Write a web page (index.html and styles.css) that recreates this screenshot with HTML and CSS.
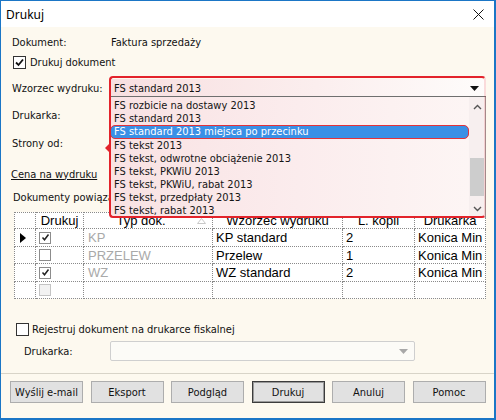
FILE: index.html
```html
<!DOCTYPE html>
<html lang="pl">
<head>
<meta charset="utf-8">
<title>Drukuj</title>
<link rel="stylesheet" href="styles.css">
</head>
<body>
<div class="win">
  <div class="titlebar">
    <span class="title">Drukuj</span>
    <svg class="close" width="11" height="11" viewBox="0 0 11 11"><path d="M0.5 0.5 L10.5 10.5 M10.5 0.5 L0.5 10.5" stroke="#111" stroke-width="1" fill="none"/></svg>
  </div>
  <div class="body">
    <div class="row r-doc"><span class="lbl">Dokument:</span><span class="val">Faktura sprzedaży</span></div>
    <div class="row r-chk">
      <span class="cb"><svg width="11" height="11" viewBox="0 0 11 11"><path d="M2 5.5 L4.5 8 L9 2.5" stroke="#111" stroke-width="1.8" fill="none"/></svg></span>
      <span>Drukuj dokument</span>
    </div>
    <div class="row r-wz">
      <span class="lbl">Wzorzec wydruku:</span>
      <div class="combo-wrap">
        <div class="combo"><span>FS standard 2013</span><svg class="arr" width="9" height="5" viewBox="0 0 9 5"><path d="M0 0 H9 L4.5 5 Z" fill="#111"/></svg></div>
        <div class="droplist">
          <div class="items">
            <div class="item">FS rozbicie na dostawy 2013</div>
            <div class="item">FS standard 2013</div>
            <div class="item sel">FS standard 2013 miejsca po przecinku</div>
            <div class="item">FS tekst 2013</div>
            <div class="item">FS tekst, odwrotne obciążenie 2013</div>
            <div class="item">FS tekst, PKWiU 2013</div>
            <div class="item">FS tekst, PKWiU, rabat 2013</div>
            <div class="item">FS tekst, przedpłaty 2013</div>
            <div class="item">FS tekst, rabat 2013</div>
          </div>
          <div class="scroll">
            <svg class="chev" width="9" height="6" viewBox="0 0 9 6"><path d="M1 5 L4.5 1.5 L8 5" stroke="#555" stroke-width="1.4" fill="none"/></svg>
            <div class="track"><div class="thumb"></div></div>
            <svg class="chev" width="9" height="6" viewBox="0 0 9 6"><path d="M1 1 L4.5 4.5 L8 1" stroke="#555" stroke-width="1.4" fill="none"/></svg>
          </div>
        </div>
        <div class="annot"></div>
        <div class="callout"></div>
      </div>
    </div>
    <div class="row r-prn"><span class="lbl">Drukarka:</span></div>
    <div class="row r-str"><span class="lbl">Strony od:</span></div>
    <div class="row r-cena"><span class="link">Cena na wydruku</span></div>
    <div class="row r-dok"><span>Dokumenty powiązane</span></div>
    <table class="grid">
      <colgroup><col class="c0"><col class="c1"><col class="c2"><col class="c3"><col class="c4"><col class="c5"></colgroup>
      <thead>
        <tr><th></th><th>Drukuj</th><th class="sort">Typ dok.<svg class="sorti" width="9" height="6" viewBox="0 0 9 6"><path d="M0.5 5.5 L4.5 0.5 L8.5 5.5 Z" stroke="#c8c8c8" fill="#fff"/></svg></th><th>Wzorzec wydruku</th><th>L. kopii</th><th>Drukarka</th></tr>
      </thead>
      <tbody>
        <tr class="ra"><td class="ind"><svg width="6" height="10" viewBox="0 0 6 10"><path d="M0 0 L6 5 L0 10 Z" fill="#000"/></svg></td><td><span class="tcb"><svg width="9" height="9" viewBox="0 0 9 9"><path d="M1.5 4.5 L3.5 6.8 L7.5 1.5" stroke="#222" stroke-width="1.5" fill="none"/></svg></span></td><td class="typ">KP</td><td>KP standard</td><td>2</td><td>Konica Min</td></tr>
        <tr class="rb"><td class="ind"></td><td><span class="tcb"></span></td><td class="typ">PRZELEW</td><td>Przelew</td><td>1</td><td>Konica Min</td></tr>
        <tr class="ra"><td class="ind"></td><td><span class="tcb"><svg width="9" height="9" viewBox="0 0 9 9"><path d="M1.5 4.5 L3.5 6.8 L7.5 1.5" stroke="#222" stroke-width="1.5" fill="none"/></svg></span></td><td class="typ">WZ</td><td>WZ standard</td><td>2</td><td>Konica Min</td></tr>
        <tr class="rb"><td class="ind"></td><td><span class="tcb off"></span></td><td></td><td></td><td></td><td></td></tr>
      </tbody>
    </table>
    <div class="row r-fis">
      <span class="cb"></span>
      <span>Rejestruj dokument na drukarce fiskalnej</span>
    </div>
    <div class="row r-fprn">
      <span class="lbl2">Drukarka:</span>
      <div class="combo2"><svg width="9" height="5" viewBox="0 0 9 5"><path d="M0 0 H9 L4.5 5 Z" fill="#a8a8a8"/></svg></div>
    </div>
  </div>
  <div class="footer">
    <button class="btn">Wyślij e-mail</button>
    <button class="btn">Eksport</button>
    <button class="btn">Podgląd</button>
    <button class="btn def">Drukuj</button>
    <button class="btn">Anuluj</button>
    <button class="btn">Pomoc</button>
  </div>
</div>
</body>
</html>
```

FILE: styles.css
```css
html, body {
  margin: 0;
  padding: 0;
  background: #fdf9ef;
}

.win {
  width: 496px;
  height: 420px;
  box-sizing: border-box;
  border: 1px solid #1b76c6;
  border-width: 1px 2px 2px 1px;
  display: flex;
  flex-direction: column;
  background: #fdf9ef;
  font-family: "DejaVu Sans Condensed", "DejaVu Sans", sans-serif;
  font-size: 11px;
  color: #111;
  overflow: hidden;
}

.titlebar {
  height: 26px;
  flex: none;
  background: #fff;
  display: flex;
  align-items: center;
  justify-content: space-between;
  padding: 0 10px 0 5px;
}

.title {
  font-family: "Noto Sans", "Open Sans", sans-serif;
  font-size: 12px;
  color: #000;
}

.close {
  display: block;
}

.body {
  flex: 1;
  padding: 0 8px 0 11px;
  display: flex;
  flex-direction: column;
}

.row {
  display: flex;
  align-items: center;
  height: 16px;
  flex: none;
}

.lbl {
  width: 98px;
  flex: none;
}

.val {
  padding-left: 1px;
}

.r-doc { margin-top: 7px; }
.r-chk { margin-top: 4px; gap: 4px; padding-left: 1px; }
.r-wz { margin-top: 9px; height: 19px; }
.r-prn { margin-top: 9px; }
.r-str { margin-top: 12px; }
.r-cena { margin-top: 15px; }
.r-dok { margin-top: 7px; padding-left: 1px; }

.cb {
  width: 11px;
  height: 11px;
  border: 1px solid #333;
  background: #fff;
  display: flex;
  align-items: center;
  justify-content: center;
  flex: none;
}

.link {
  text-decoration: underline;
  margin-left: -1px;
}

/* combo with opened list */
.combo-wrap {
  position: relative;
  flex: 1;
  height: 19px;
  z-index: 2;
}

.combo {
  height: 18px;
  box-sizing: border-box;
  display: flex;
  align-items: center;
  justify-content: space-between;
  padding: 1px 7px 0 4px;
  background: linear-gradient(to right, #f8dfe0, #fbeeee 55%, #fefcfb);
  border-bottom: 1px solid #6f6f6f;
}

.droplist {
  position: absolute;
  left: 0;
  right: 0;
  top: 18px;
  height: 121px;
  display: flex;
  background: linear-gradient(to right, #f9e2e3, #fbeced 50%, #fdf6f5);
  border-right: 1px solid #9a9a9a;
  box-sizing: border-box;
}

.items {
  flex: 1;
  padding-top: 2px;
}

.item {
  height: 13px;
  line-height: 13px;
  padding-left: 4px;
  white-space: nowrap;
  color: #151515;
}

.item.sel {
  background: #3a90e6;
  color: #fff;
  border: 1px solid #e2323a;
  border-radius: 5px;
  margin: 0 0 0 0;
  height: 12px;
  line-height: 12px;
  padding-left: 3px;
}

.scroll {
  width: 16px;
  flex: none;
  display: flex;
  flex-direction: column;
  align-items: center;
  background: #f7efef;
  padding: 7px 0 6px;
  box-sizing: border-box;
}

.chev {
  display: block;
  flex: none;
}

.track {
  flex: 1;
  width: 100%;
  position: relative;
}

.thumb {
  position: absolute;
  left: 1px;
  right: 1px;
  top: 48px;
  height: 38px;
  background: #cdcdcd;
}

.annot {
  position: absolute;
  left: -1px;
  top: -3px;
  width: 377px;
  height: 142px;
  border: 2px solid #e3232b;
  border-right-color: rgba(227, 35, 43, 0.15);
  border-radius: 4px;
  box-sizing: border-box;
  pointer-events: none;
}

.callout {
  position: absolute;
  left: -5px;
  top: 65px;
  width: 0;
  height: 0;
  border-top: 4px solid transparent;
  border-bottom: 4px solid transparent;
  border-right: 4px solid #e3232b;
}

/* grid */
.grid {
  margin-top: 7px;
  margin-left: 2px;
  border-collapse: collapse;
  table-layout: fixed;
  width: 471px;
  background: #fff;
  font-family: "Liberation Sans", Arial, sans-serif;
  font-size: 13px;
  color: #000;
  flex: none;
}

.c0 { width: 21px; }
.c1 { width: 48px; }
.c2 { width: 129px; }
.c3 { width: 130px; }
.c4 { width: 72px; }
.c5 { width: 71px; }

.grid th, .grid td {
  border: 1px dotted #8a8a8a;
  padding: 0 0 0 3px;
  white-space: nowrap;
  overflow: hidden;
}

.grid th {
  height: 15px;
  font-weight: normal;
  text-align: center;
  padding: 0;
  line-height: 15px;
}

.grid th.sort {
  position: relative;
  padding-right: 14px;
}

.sorti {
  position: absolute;
  right: 6px;
  top: 5px;
}

.grid tr.ra td { height: 17px; }
.grid tr.rb td { height: 16px; }

.grid td.ind {
  padding: 0 0 0 5px;
  vertical-align: middle;
}

.grid td.ind svg { display: block; }

.grid td.typ {
  color: #a9a9a9;
  padding-left: 4px;
}

.tcb {
  display: flex;
  width: 10px;
  height: 10px;
  border: 1px solid #8c8c8c;
  background: #fff;
  align-items: center;
  justify-content: center;
}

.tcb.off {
  border-color: #c4c4c4;
  background: #f2f2f2;
}

.r-fis { margin-top: 22px; gap: 3px; padding-left: 4px; }

.r-fprn { margin-top: 4px; height: 20px; }

.lbl2 {
  width: 86px;
  padding-left: 12px;
  flex: none;
}

.combo2 {
  width: 305px;
  height: 20px;
  box-sizing: border-box;
  border: 1px solid #cfcfcf;
  border-radius: 2px;
  background: #fcfbf7;
  display: flex;
  align-items: center;
  justify-content: flex-end;
  padding-right: 6px;
}

.footer {
  height: 45px;
  flex: none;
  border-top: 1px solid #d8d4c8;
  display: flex;
  gap: 7.5px;
  padding: 7px 0 0 9px;
  box-sizing: border-box;
}

.btn {
  width: 73px;
  height: 22px;
  margin: 0;
  padding: 0;
  background: #e1e1e1;
  border: 1px solid #adadad;
  font-family: "DejaVu Sans Condensed", "DejaVu Sans", sans-serif;
  font-size: 11px;
  color: #111;
}

.btn.def {
  border: 1px solid #3c3c3c;
  box-shadow: inset 0 0 0 1px #9a9a9a;
}
```
